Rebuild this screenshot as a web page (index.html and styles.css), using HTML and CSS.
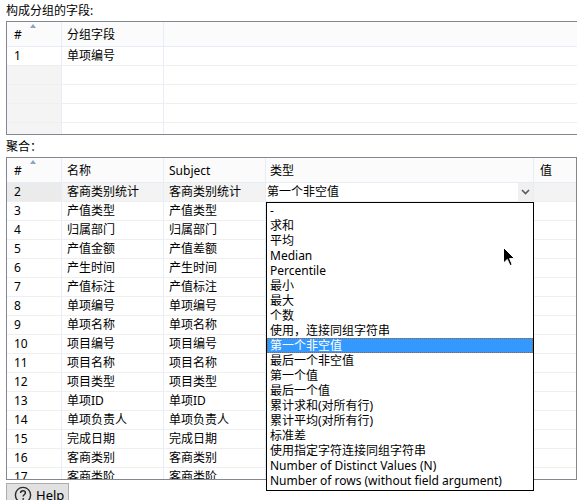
FILE: index.html
```html
<!DOCTYPE html>
<html>
<head>
<meta charset="utf-8">
<link rel="stylesheet" href="styles.css">
</head>
<body>
<div class="page">
  <div class="label l1">构成分组的字段:</div>
  <div class="grid g1">
    <div class="row head">
      <div class="c c1">#<span class="sort"></span></div>
      <div class="c c2">分组字段</div>
      <div class="c c3 wide"></div>
    </div>
    <div class="row">
      <div class="c c1">1</div><div class="c c2">单项编号</div><div class="c c3 wide"></div>
    </div>
    <div class="row empty"><div class="c c1"></div><div class="c c2"></div><div class="c c3 wide"></div></div>
    <div class="row empty"><div class="c c1"></div><div class="c c2"></div><div class="c c3 wide"></div></div>
    <div class="row empty"><div class="c c1"></div><div class="c c2"></div><div class="c c3 wide"></div></div>
    <div class="row empty"><div class="c c1"></div><div class="c c2"></div><div class="c c3 wide"></div></div>
  </div>

  <div class="label l2">聚合：</div>
  <div class="grid g2">
    <div class="row head">
      <div class="c c1">#<span class="sort"></span></div>
      <div class="c c2">名称</div>
      <div class="c c3">Subject</div>
      <div class="c c4">类型</div>
      <div class="c c5">值</div>
    </div>
    <div class="row current">
      <div class="c c1">2</div><div class="c c2">客商类别统计</div><div class="c c3">客商类别统计</div>
      <div class="c c4 combo"><span class="combo-text">第一个非空值</span><span class="combo-btn"><svg width="9" height="6" viewBox="0 0 9 6"><path d="M1 1 L4.5 4.5 L8 1" fill="none" stroke="#5a5a5a" stroke-width="1.6"/></svg></span></div>
      <div class="c c5"></div>
    </div>
    <div class="row"><div class="c c1">3</div><div class="c c2">产值类型</div><div class="c c3">产值类型</div><div class="c c4"></div><div class="c c5"></div></div>
    <div class="row"><div class="c c1">4</div><div class="c c2">归属部门</div><div class="c c3">归属部门</div><div class="c c4"></div><div class="c c5"></div></div>
    <div class="row"><div class="c c1">5</div><div class="c c2">产值金额</div><div class="c c3">产值差额</div><div class="c c4"></div><div class="c c5"></div></div>
    <div class="row"><div class="c c1">6</div><div class="c c2">产生时间</div><div class="c c3">产生时间</div><div class="c c4"></div><div class="c c5"></div></div>
    <div class="row"><div class="c c1">7</div><div class="c c2">产值标注</div><div class="c c3">产值标注</div><div class="c c4"></div><div class="c c5"></div></div>
    <div class="row"><div class="c c1">8</div><div class="c c2">单项编号</div><div class="c c3">单项编号</div><div class="c c4"></div><div class="c c5"></div></div>
    <div class="row"><div class="c c1">9</div><div class="c c2">单项名称</div><div class="c c3">单项名称</div><div class="c c4"></div><div class="c c5"></div></div>
    <div class="row"><div class="c c1">10</div><div class="c c2">项目编号</div><div class="c c3">项目编号</div><div class="c c4"></div><div class="c c5"></div></div>
    <div class="row"><div class="c c1">11</div><div class="c c2">项目名称</div><div class="c c3">项目名称</div><div class="c c4"></div><div class="c c5"></div></div>
    <div class="row"><div class="c c1">12</div><div class="c c2">项目类型</div><div class="c c3">项目类型</div><div class="c c4"></div><div class="c c5"></div></div>
    <div class="row"><div class="c c1">13</div><div class="c c2">单项ID</div><div class="c c3">单项ID</div><div class="c c4"></div><div class="c c5"></div></div>
    <div class="row"><div class="c c1">14</div><div class="c c2">单项负责人</div><div class="c c3">单项负责人</div><div class="c c4"></div><div class="c c5"></div></div>
    <div class="row"><div class="c c1">15</div><div class="c c2">完成日期</div><div class="c c3">完成日期</div><div class="c c4"></div><div class="c c5"></div></div>
    <div class="row"><div class="c c1">16</div><div class="c c2">客商类别</div><div class="c c3">客商类别</div><div class="c c4"></div><div class="c c5"></div></div>
    <div class="row"><div class="c c1">17</div><div class="c c2">客商类阶</div><div class="c c3">客商类阶</div><div class="c c4"></div><div class="c c5"></div></div>
  </div>

  <button class="help">
    <svg class="help-icon" width="18" height="18" viewBox="0 0 18 18"><circle cx="9" cy="9" r="7.6" fill="none" stroke="#2b2b2b" stroke-width="1.4"/><path d="M6.6 7.1 C6.6 5.6 7.7 4.8 9 4.8 C10.4 4.8 11.4 5.6 11.4 6.9 C11.4 8.4 9.2 8.6 9.2 10.4" fill="none" stroke="#2b2b2b" stroke-width="1.5"/><circle cx="9.2" cy="12.9" r="0.95" fill="#2b2b2b"/></svg>
    <span>Help</span>
  </button>

  <div class="dropdown">
    <div class="item">-</div>
    <div class="item">求和</div>
    <div class="item">平均</div>
    <div class="item">Median</div>
    <div class="item">Percentile</div>
    <div class="item">最小</div>
    <div class="item">最大</div>
    <div class="item">个数</div>
    <div class="item">使用，连接同组字符串</div>
    <div class="item sel">第一个非空值</div>
    <div class="item">最后一个非空值</div>
    <div class="item">第一个值</div>
    <div class="item">最后一个值</div>
    <div class="item">累计求和(对所有行)</div>
    <div class="item">累计平均(对所有行)</div>
    <div class="item">标准差</div>
    <div class="item">使用指定字符连接同组字符串</div>
    <div class="item">Number of Distinct Values (N)</div>
    <div class="item">Number of rows (without field argument)</div>
  </div>

  <svg class="cursor" width="13" height="20" viewBox="0 0 13 20"><path d="M0.5 0.5 L0.5 16 L4.3 12.4 L7 18.6 L9.2 17.6 L6.6 11.6 L11.6 11.6 Z" fill="#000" stroke="#fff" stroke-width="1"/></svg>
</div>
</body>
</html>
```
FILE: styles.css
```css
html, body {
  margin: 0;
  padding: 0;
  overflow: hidden;
  background: #ffffff;
}

body {
  font-family: "Noto Sans", "Noto Sans CJK SC", sans-serif;
  font-size: 12px;
  color: #000;
}

.page {
  position: relative;
  width: 577px;
  height: 500px;
  padding-left: 6px;
  box-sizing: border-box;
  overflow: hidden;
}

.label {
  height: 21px;
  line-height: 22px;
  white-space: nowrap;
}

.l2 {
  height: 22px;
  line-height: 24px;
}

.grid {
  border: 1px solid #828790;
  box-sizing: border-box;
  overflow: hidden;
  background: #fff;
}

.g1 {
  width: 571px;
  height: 114px;
  border-right: none;
}

.g2 {
  width: 571px;
  height: 323px;
}

.row {
  display: flex;
}

.c {
  position: relative;
  box-sizing: border-box;
  height: 19px;
  line-height: 18px;
  padding-left: 5px;
  border-right: 1px solid #e7edf6;
  border-bottom: 1px solid #efefef;
  white-space: nowrap;
  overflow: hidden;
  flex: none;
}

.c1 { width: 55px; padding-left: 7px; }
.c2 { width: 102px; }
.c3 { width: 102px; }
.c4 { width: 268px; padding-left: 4px; }
.c5 { flex: 1; padding-left: 6px; border-right: none; }
.wide { flex: 1; border-right: none; }

.head .c {
  height: 25px;
  line-height: 25px;
  background: #fbfbfb;
  border-bottom: 1px solid #e7edf6;
  overflow: visible;
}

.sort {
  position: absolute;
  left: 23px;
  top: 2px;
  width: 0;
  height: 0;
  border-left: 3.5px solid transparent;
  border-right: 3.5px solid transparent;
  border-bottom: 4px solid #8aa4c4;
}

.empty .c1 {
  background: #f4f4f4;
}

.current .c { background: #f3f3f3; }
.current .c1 { background: #ebebeb; }

.current .combo {
  display: flex;
  padding-left: 1px;
  background: #fff;
}

.combo-text {
  flex: 1;
}

.combo-btn {
  width: 15px;
  display: flex;
  align-items: center;
  justify-content: center;
  background: #f0f0f0;
  height: 18px;
}

.help {
  display: flex;
  align-items: center;
  gap: 4px;
  margin-top: 3px;
  height: 24px;
  width: 63px;
  padding: 0 0 0 7px;
  box-sizing: border-box;
  border: 1px solid #adadad;
  background: #e1e1e1;
  font-family: "Noto Sans", sans-serif;
  font-size: 13px;
  color: #000;
}

.help-icon { flex: none; }

.dropdown {
  position: absolute;
  left: 266px;
  top: 202px;
  width: 268px;
  height: 289px;
  box-sizing: border-box;
  border: 1px solid #000;
  background: #fff;
}

.item {
  height: 15px;
  line-height: 15px;
  padding-left: 3px;
  white-space: nowrap;
}

.item.sel {
  background: #3399ff;
  color: #fff;
  outline: 1px dotted #a0602a;
  outline-offset: -1px;
}

.cursor {
  position: absolute;
  left: 503px;
  top: 247px;
}
```
